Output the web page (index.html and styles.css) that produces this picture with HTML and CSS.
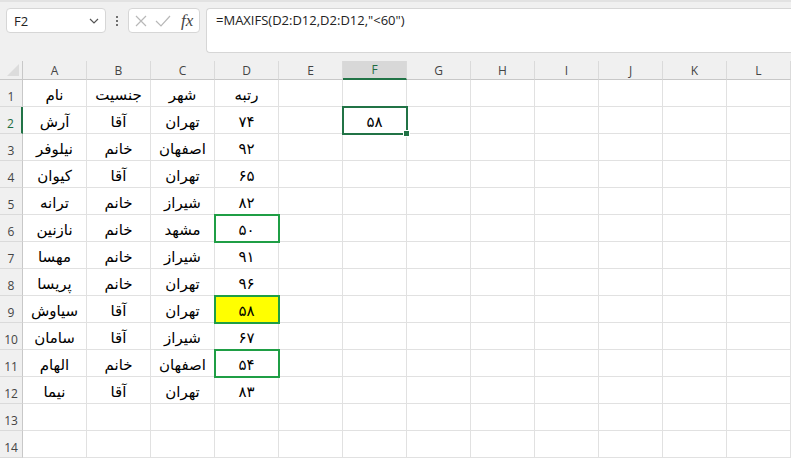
FILE: index.html
```html
<!DOCTYPE html>
<html lang="fa">
<head>
  <meta charset="UTF-8" />
  <title>MAXIFS</title>
  <link rel="stylesheet" href="styles.css">
</head>
<body>

<div class="toolbar">
  <div class="namebox">
    <span>F2</span>
    <svg width="10" height="6" viewBox="0 0 10 6"><polyline points="1,1 5,5 9,1" fill="none" stroke="#555" stroke-width="1.2"/></svg>
  </div>
  <div class="dots"><i></i><i></i><i></i></div>
  <div class="fxbox">
    <svg width="14" height="14" viewBox="0 0 14 14"><path d="M2 2 L12 12 M12 2 L2 12" stroke="#b8b8b8" stroke-width="1.2" fill="none"/></svg>
    <svg width="16" height="14" viewBox="0 0 16 14"><polyline points="1,7 6,12 15,2" stroke="#b8b8b8" stroke-width="1.2" fill="none"/></svg>
    <span class="fx">fx</span>
  </div>
  <div class="formula">=MAXIFS(D2:D12,D2:D12,"&lt;60")</div>
</div>

<div class="sheet" id="sheet"></div>

<script>
  const cols = ['A','B','C','D','E','F','G','H','I','J','K','L'];
  const data = [
    ['نام', 'جنسیت', 'شهر', 'رتبه'],
    ['آرش', 'آقا', 'تهران', '۷۴'],
    ['نیلوفر', 'خانم', 'اصفهان', '۹۲'],
    ['کیوان', 'آقا', 'تهران', '۶۵'],
    ['ترانه', 'خانم', 'شیراز', '۸۲'],
    ['نازنین', 'خانم', 'مشهد', '۵۰'],
    ['مهسا', 'خانم', 'شیراز', '۹۱'],
    ['پریسا', 'خانم', 'تهران', '۹۶'],
    ['سیاوش', 'آقا', 'تهران', '۵۸'],
    ['سامان', 'آقا', 'شیراز', '۶۷'],
    ['الهام', 'خانم', 'اصفهان', '۵۴'],
    ['نیما', 'آقا', 'تهران', '۸۳'],
    [], []
  ];
  // cells with borders / fill
  const marks = { 'F2': 'sel', 'D6': 'box', 'D9': 'box hl', 'D11': 'box' };
  const extra = { 'F2': '۵۸' };

  const sheet = document.getElementById('sheet');
  let html = '<div class="corner"></div>';
  cols.forEach(c => {
    html += `<div class="ch${c === 'F' ? ' active' : ''}">${c}</div>`;
  });
  data.forEach((row, i) => {
    const r = i + 1;
    html += `<div class="rh${r === 2 ? ' active' : ''}">${r}</div>`;
    cols.forEach((c, j) => {
      const ref = c + r;
      const text = row[j] || extra[ref] || '';
      const cls = marks[ref] ? ' ' + marks[ref] : '';
      html += `<div class="cell${cls}"><span>${text}</span>${ref === 'F2' ? '<b class="handle"></b>' : ''}</div>`;
    });
  });
  sheet.innerHTML = html;
</script>

</body>
</html>
```

FILE: styles.css
```css
body {
  margin: 0;
  background: #f0f0f0;
  font-family: "Open Sans", "Noto Sans", sans-serif;
  overflow: hidden;
}

.toolbar {
  display: flex;
  align-items: flex-start;
  height: 61px;
  box-sizing: border-box;
  padding: 6px 0 0 6px;
  border-top: 2px solid #e2e2e2;
}

.namebox {
  width: 100px;
  height: 25px;
  box-sizing: border-box;
  background: #fff;
  border: 1px solid #d6d6d6;
  border-radius: 4px;
  display: flex;
  align-items: center;
  justify-content: space-between;
  padding: 0 6px 0 7px;
  font-size: 13px;
  color: #222;
}

.dots {
  width: 22px;
  height: 25px;
  display: flex;
  flex-direction: column;
  align-items: center;
  justify-content: center;
  gap: 2px;
}

.dots i {
  width: 2px;
  height: 2px;
  background: #444;
  border-radius: 1px;
}

.fxbox {
  width: 72px;
  height: 25px;
  box-sizing: border-box;
  background: #fff;
  border: 1px solid #d6d6d6;
  border-radius: 4px;
  display: flex;
  align-items: center;
  gap: 7px;
  padding-left: 5px;
}

.fx {
  font-family: "Liberation Serif", serif;
  font-style: italic;
  font-size: 17px;
  color: #444;
  margin-left: 3px;
}

.formula {
  margin-left: 6px;
  flex: 1;
  height: 45px;
  box-sizing: border-box;
  background: #fff;
  border: 1px solid #d6d6d6;
  border-right: none;
  border-radius: 4px 0 0 4px;
  padding: 2px 0 0 9px;
  font-size: 13px;
  color: #222;
}

.sheet {
  display: grid;
  grid-template-columns: 23px repeat(12, 64px);
  grid-template-rows: 19px repeat(14, 27px);
  background: #fff;
}

.corner, .ch, .rh {
  background: #f0f0f0;
  color: #444;
  font-size: 12px;
  display: flex;
  align-items: center;
  justify-content: center;
  box-sizing: border-box;
}

.corner {
  border-right: 1px solid #c8c8c8;
  border-bottom: 1px solid #c8c8c8;
  position: relative;
}

.corner::after {
  content: "";
  position: absolute;
  right: 3px;
  bottom: 3px;
  border-style: solid;
  border-width: 0 0 12px 12px;
  border-color: transparent transparent #dcdcdc transparent;
}

.ch {
  border-right: 1px solid #dadada;
  border-bottom: 1px solid #c8c8c8;
}

.ch.active {
  background: #d8d8d8;
  color: #1e6b41;
  border-bottom: 2px solid #217346;
}

.rh {
  border-right: 1px solid #c8c8c8;
  border-bottom: 1px solid #dadada;
  padding-top: 6px;
}

.rh.active {
  color: #1e6b41;
  border-right: 2px solid #217346;
}

.cell {
  position: relative;
  box-sizing: border-box;
  border-right: 1px solid #e1e1e1;
  border-bottom: 1px solid #e1e1e1;
  display: flex;
  align-items: flex-end;
  justify-content: center;
  padding-bottom: 2px;
  font-family: "DejaVu Sans", sans-serif;
  font-size: 15px;
  color: #000;
  direction: rtl;
}

.cell.box {
  outline: 2px solid #1f9e45;
  outline-offset: -1px;
  z-index: 1;
}

.cell.hl {
  background: #ffff00;
}

.cell.sel {
  outline: 2px solid #217346;
  outline-offset: -1px;
  z-index: 1;
}

.handle {
  position: absolute;
  right: -4px;
  bottom: -4px;
  width: 5px;
  height: 5px;
  background: #217346;
  border: 1px solid #fff;
}
```
